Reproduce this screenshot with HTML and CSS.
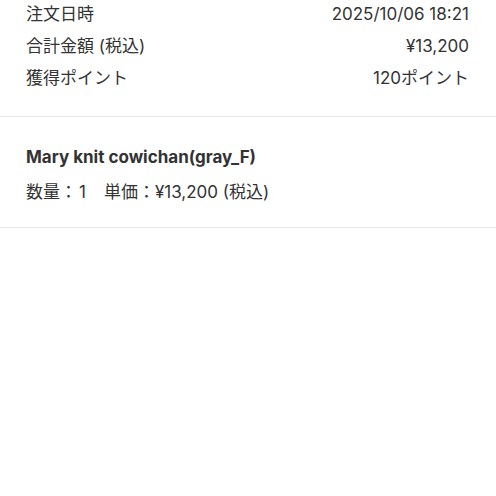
FILE: index.html
```html
<!DOCTYPE html>
<html lang="ja">

<head>
  <meta charset="UTF-8">
  <meta name="viewport" content="width=device-width, initial-scale=1.0">
  <title>注文詳細</title>
  <link rel="stylesheet" href="styles.css">
</head>

<body>
  <div class="summary">
    <div class="row"><span>注文日時</span><span>2025/10/06 18:21</span></div>
    <div class="row"><span>合計金額 (税込)</span><span>¥13,200</span></div>
    <div class="row"><span>獲得ポイント</span><span>120ポイント</span></div>
  </div>
  <div class="item">
    <div class="item-name">Mary knit cowichan(gray_F)</div>
    <div class="item-meta"><span>数量：</span><span class="qty">1</span><span>単価：</span><span>¥13,200 (税込)</span></div>
  </div>
</body>

</html>
```
FILE: styles.css
```css
* {
  margin: 0;
  padding: 0;
  box-sizing: border-box;
}

body {
  background: #fff;
  color: #333;
  font-family: Inter, "Noto Sans CJK JP", sans-serif;
  font-size: 17px;
}

.summary {
  margin-top: -2px;
  padding: 0 27px 22px 26px;
  border-bottom: 1px solid #e6e6e6;
}

.row {
  display: flex;
  justify-content: space-between;
  line-height: 32px;
}

.item {
  padding: 24px 26px 19px;
  border-bottom: 1px solid #e6e6e6;
}

.item-name {
  font-weight: 700;
  line-height: 32px;
}

.item-meta {
  line-height: 32px;
  margin-top: 3px;
}

.qty {
  margin-left: 2px;
  margin-right: 18px;
}
```
